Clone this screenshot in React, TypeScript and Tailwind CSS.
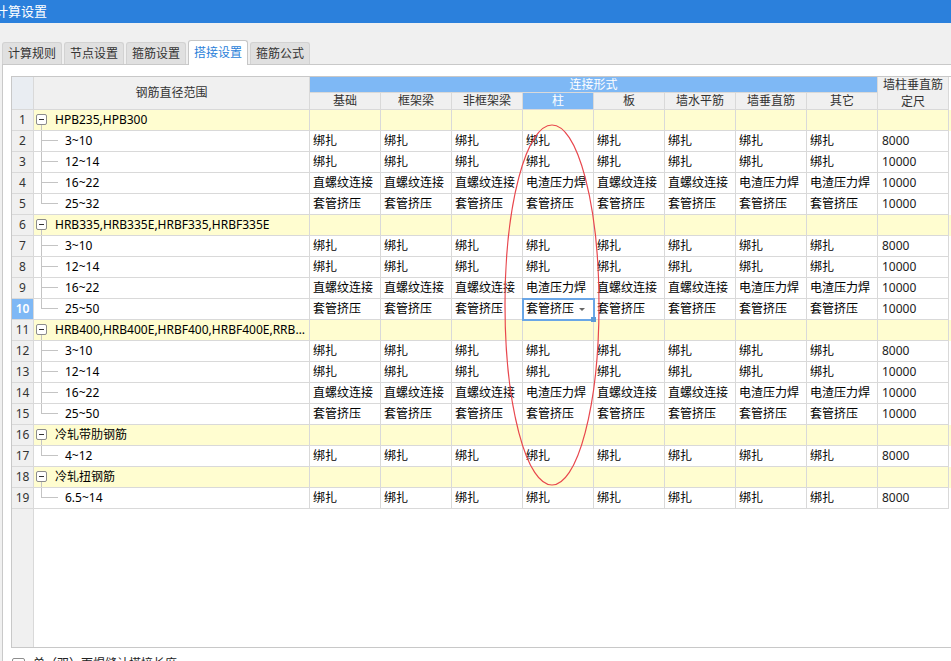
import React from 'react'

// ─── 数据 ────────────────────────────────────────────

const COLS = ['基础', '框架梁', '非框架梁', '柱', '板', '墙水平筋', '墙垂直筋', '其它']
const TABS = ['计算规则', '节点设置', '箍筋设置', '搭接设置', '箍筋公式']

const BZ = Array(8).fill('绑扎')
const TG = Array(8).fill('套管挤压')
const ZL = ['直螺纹连接', '直螺纹连接', '直螺纹连接', '电渣压力焊', '直螺纹连接', '直螺纹连接', '电渣压力焊', '电渣压力焊']

type Row =
  | { kind: 'group'; label: string }
  | { kind: 'item'; label: string; values: string[]; length: string; last?: boolean }

const ROWS: Row[] = [
  { kind: 'group', label: 'HPB235,HPB300' },
  { kind: 'item', label: '3~10', values: BZ, length: '8000' },
  { kind: 'item', label: '12~14', values: BZ, length: '10000' },
  { kind: 'item', label: '16~22', values: ZL, length: '10000' },
  { kind: 'item', label: '25~32', values: TG, length: '10000', last: true },
  { kind: 'group', label: 'HRB335,HRB335E,HRBF335,HRBF335E' },
  { kind: 'item', label: '3~10', values: BZ, length: '8000' },
  { kind: 'item', label: '12~14', values: BZ, length: '10000' },
  { kind: 'item', label: '16~22', values: ZL, length: '10000' },
  { kind: 'item', label: '25~50', values: TG, length: '10000', last: true },
  { kind: 'group', label: 'HRB400,HRB400E,HRBF400,HRBF400E,RRB400' },
  { kind: 'item', label: '3~10', values: BZ, length: '8000' },
  { kind: 'item', label: '12~14', values: BZ, length: '10000' },
  { kind: 'item', label: '16~22', values: ZL, length: '10000' },
  { kind: 'item', label: '25~50', values: TG, length: '10000', last: true },
  { kind: 'group', label: '冷轧带肋钢筋' },
  { kind: 'item', label: '4~12', values: BZ, length: '8000', last: true },
  { kind: 'group', label: '冷轧扭钢筋' },
  { kind: 'item', label: '6.5~14', values: BZ, length: '8000', last: true },
]

// 当前选中：第 10 行「柱」列
const SEL_ROW = 10
const SEL_COL = 3

const GRID = 'grid grid-cols-[22px_276px_repeat(9,71px)]'
const CELL = 'border-r border-b border-[#d9d9d9]'

// ─── 表头 ────────────────────────────────────────────

function Header() {
  return (
    <div className={`${GRID} grid-rows-[16px_17px] text-[12px] text-[#333]`}>
      <div className={`${CELL} row-span-2 bg-[#e9edf2]`} />
      <div className={`${CELL} row-span-2 bg-[#f0f0f0] flex items-center justify-center`}>钢筋直径范围</div>
      <div className={`${CELL} col-span-8 bg-[#7eb8f5] text-white flex items-center justify-center leading-none`}>连接形式</div>
      <div className={`${CELL} row-span-2 bg-[#f0f0f0] flex flex-col items-center justify-center leading-[17px]`}>
        <span>墙柱垂直筋</span>
        <span>定尺</span>
      </div>
      {COLS.map((c, i) => (
        <div
          key={c}
          className={`${CELL} flex items-center justify-center leading-none ${
            i === SEL_COL ? 'bg-[#7eb8f5] text-white' : 'bg-[#f0f0f0]'
          }`}
        >
          {c}
        </div>
      ))}
    </div>
  )
}

// ─── 树形首列 ─────────────────────────────────────────

function GroupLabel({ label }: { label: string }) {
  return (
    <div className="flex h-full min-w-0 items-stretch">
      <div className="ml-[2px] flex w-[11px] shrink-0 flex-col items-center">
        <div className="h-[4px]" />
        <div className="flex h-[11px] w-[11px] items-center justify-center rounded-[2px] border border-[#8c8c8c] bg-white">
          <div className="h-px w-[5px] bg-[#333]" />
        </div>
        <div className="w-px flex-1 bg-[#c4c4c4]" />
      </div>
      <span className="ml-[8px] min-w-0 self-center truncate pr-1 text-[12px]">{label}</span>
    </div>
  )
}

function ItemLabel({ label, last }: { label: string; last?: boolean }) {
  return (
    <div className="flex h-full items-stretch">
      <div className="ml-[7px] flex w-[17px] shrink-0 flex-col">
        <div className="h-1/2 border-b border-l border-[#c4c4c4]" />
        <div className={`h-1/2 ${last ? '' : 'border-l border-[#c4c4c4]'}`} />
      </div>
      <span className="ml-[7px] self-center text-[12px]">{label}</span>
    </div>
  )
}

// ─── 数据行 ──────────────────────────────────────────

function TableRow({ row, n }: { row: Row; n: number }) {
  const selected = n === SEL_ROW
  const numCls = selected ? 'bg-[#7eb8f5] text-white font-semibold' : 'bg-[#f0f0f0] text-[#333]'

  if (row.kind === 'group') {
    return (
      <div className={`${GRID} h-[21px] bg-[#fffdd0]`}>
        <div className={`${CELL} ${numCls} flex items-center justify-center text-[12px]`}>{n}</div>
        <div className={`${CELL} min-w-0`}>
          <GroupLabel label={row.label} />
        </div>
        {Array.from({ length: 9 }).map((_, i) => (
          <div key={i} className={CELL} />
        ))}
      </div>
    )
  }

  return (
    <div className={`${GRID} h-[21px] bg-white`}>
      <div className={`${CELL} ${numCls} flex items-center justify-center text-[12px]`}>{n}</div>
      <div className={CELL}>
        <ItemLabel label={row.label} last={row.last} />
      </div>
      {row.values.map((v, i) =>
        selected && i === SEL_COL ? (
          <div
            key={i}
            className={`${CELL} relative flex items-center pl-[3px] text-[12px] outline-2 -outline-offset-1 outline-[#6aa6e6]`}
          >
            <span>{v}</span>
            <span className="ml-auto mr-[8px] h-0 w-0 border-x-[3px] border-t-[3px] border-x-transparent border-t-[#666]" />
            <div className="absolute -right-[3px] -bottom-[3px] h-[5px] w-[5px] bg-[#5b9bd8]" />
          </div>
        ) : (
          <div key={i} className={`${CELL} flex items-center pl-[3px] text-[12px] text-black`}>
            {v}
          </div>
        ),
      )}
      <div className={`${CELL} flex items-center pl-[4px] text-[12px] text-[#222]`}>{row.length}</div>
    </div>
  )
}

// ─── 页面 ────────────────────────────────────────────

export default function App() {
  return (
    <div className="relative flex h-[661px] w-[951px] flex-col overflow-hidden bg-[#f0f0f0] font-['Noto_Sans','Noto_Sans_CJK_SC',sans-serif] text-black">
      {/* 标题栏 */}
      <div className="flex h-[23px] shrink-0 items-center bg-[#2b80dc] text-[13px] text-white">
        <span className="-ml-[5px]">计算设置</span>
      </div>

      {/* 页签 */}
      <div className="flex h-[41px] shrink-0 items-end gap-[2px] pl-[2px]">
        {TABS.map((t) =>
          t === '搭接设置' ? (
            <div
              key={t}
              className="relative z-10 -mb-px flex h-[25px] items-center rounded-t-[3px] border border-b-0 border-[#c6c6c6] bg-white px-[5px] text-[12px] text-[#2b7fd9]"
            >
              {t}
            </div>
          ) : (
            <div
              key={t}
              className="flex h-[22px] items-center rounded-t-[3px] border border-b-0 border-[#d2d2d2] bg-[#e0e0e0] px-[5px] text-[12px] text-[#333]"
            >
              {t}
            </div>
          ),
        )}
      </div>

      {/* 内容面板 */}
      <div className="ml-[2px] flex flex-1 flex-col border-l border-t border-[#c9c9c9] bg-white pl-[8px] pt-[11px]">
        <div className="flex h-[572px] w-[960px] shrink-0 flex-col border-b border-l border-t border-[#c8c8c8]">
          <Header />
          {ROWS.map((r, i) => (
            <TableRow key={i} row={r} n={i + 1} />
          ))}
          <div className="flex flex-1">
            <div className="w-[22px] border-r border-[#d9d9d9] bg-[#f0f0f0]" />
            <div className="flex-1 bg-white" />
          </div>
        </div>
        <label className="mt-[7px] flex items-center gap-[8px] pl-px text-[12px] text-[#222]">
          <span className="h-[13px] w-[13px] rounded-[2px] border border-[#8e8e8e] bg-white" />
          单（双）面焊缝计搭接长度
        </label>
      </div>

      {/* 红色标注圈 */}
      <svg className="pointer-events-none absolute left-0 top-0" width="951" height="661">
        <ellipse cx="552" cy="305" rx="47" ry="180" fill="none" stroke="#e8474d" strokeWidth="1.2" />
      </svg>
    </div>
  )
}
